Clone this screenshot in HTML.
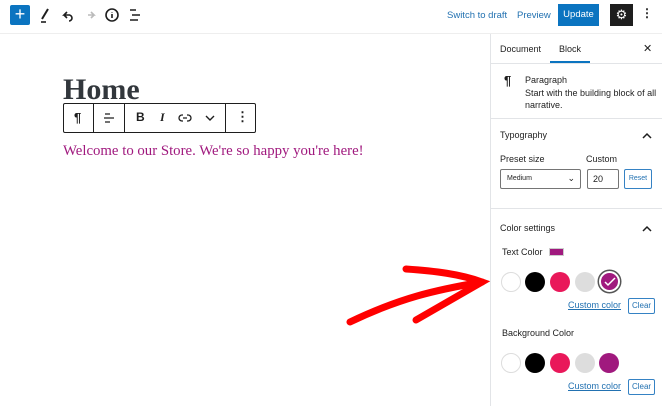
<!DOCTYPE html>
<html><head><style>
*{box-sizing:border-box;margin:0;padding:0}
body{width:662px;height:406px;overflow:hidden;background:#fff;font-family:"Liberation Sans",sans-serif;position:relative;color:#1e1e1e}
.a{position:absolute}
.top{left:0;top:0;width:662px;height:34px;border-bottom:1px solid #eee;}
.hr{position:absolute;left:0;width:171px;height:1px;background:#e2e4e7}
.sw{position:absolute;width:20px;height:20px;border-radius:50%}
.btn{position:absolute;border:1px solid #3582c4;color:#2271b1;font-size:8px;text-align:center;border-radius:2px;background:#fff}
.lnk{position:absolute;color:#2271b1;text-decoration:underline;font-size:9px}
</style></head><body>
<div class="a top">
 <div class="a" style="left:10px;top:5px;width:20px;height:20px;background:#0b74c0;border-radius:2px;color:#fff;font-size:18px;line-height:19px;text-align:center">+</div>
 <svg class="a" style="left:38px;top:7px" width="110" height="16" viewBox="0 0 110 16" fill="none" stroke="#1e1e1e" stroke-width="1.6">
  <path d="M4 12 L10 2" stroke-width="2"/><path d="M3 15h5"/>
  <path d="M32 8h-6l3-3M26 8l3 3M26 8h5a3 3 0 0 1 0 6"/>
  <path d="M50 8h6l-3-3M56 8l-3 3" stroke="#bbb"/>
  <circle cx="74" cy="8" r="6"/><path d="M74 7v4M74 5v.5"/>
  <path d="M92 3h6M94 8h8M92 13h8"/>
 </svg>
 <div class="a" style="left:447px;top:10px;font-size:9.5px;color:#2271b1">Switch to draft</div>
 <div class="a" style="left:517px;top:10px;font-size:9.5px;color:#2271b1">Preview</div>
 <div class="a" style="left:558px;top:4px;width:41px;height:22px;background:#0b74c0;color:#fff;font-size:9.5px;line-height:22px;text-align:center">Update</div>
 <div class="a" style="left:610px;top:4px;width:23px;height:22px;background:#1e1e1e;color:#fff;font-size:13px;line-height:22px;text-align:center">⚙</div>
 <div class="a" style="left:641px;top:6px;font-size:12px;font-weight:bold">⋮</div>
</div>
<div class="a" style="left:63px;top:73px;font-family:'Liberation Serif',serif;font-weight:bold;font-size:30px;color:#32373c">Home</div>
<div class="a" style="left:63px;top:103px;width:193px;height:30px;border:1px solid #1e1e1e;border-radius:2px;font-size:13px">
 <div class="a" style="left:29px;top:0;width:1px;height:28px;background:#1e1e1e"></div>
 <div class="a" style="left:60px;top:0;width:1px;height:28px;background:#1e1e1e"></div>
 <div class="a" style="left:161px;top:0;width:1px;height:28px;background:#1e1e1e"></div>
 <div class="a" style="left:10px;top:6px;font-weight:bold">¶</div>
 <svg class="a" style="left:39px;top:8px" width="12" height="12" stroke="#1e1e1e" stroke-width="1.3"><path d="M2 2h5M1 6h10M2 10h5"/></svg>
 <div class="a" style="left:72px;top:6px;font-weight:bold;font-size:12px">B</div>
 <div class="a" style="left:96px;top:6px;font-style:italic;font-size:12px;font-family:'Liberation Serif',serif;font-weight:bold">I</div>
 <svg class="a" style="left:114px;top:9px" width="14" height="10" fill="none" stroke="#1e1e1e" stroke-width="1.3"><path d="M5 2H4a3 3 0 0 0 0 6h1M9 2h1a3 3 0 0 1 0 6H9M5 5h4"/></svg>
 <svg class="a" style="left:141px;top:11px" width="10" height="8" fill="none" stroke="#1e1e1e" stroke-width="1.4"><path d="M1 1l4 4 4-4"/></svg>
 <div class="a" style="left:172px;top:5px;font-weight:bold">⋮</div>
</div>
<div class="a" style="left:63px;top:143px;font-family:'Liberation Serif',serif;font-size:14.8px;color:#a0197e">Welcome to our Store. We're so happy you're here!</div>
<svg class="a" style="left:340px;top:250px" width="160" height="90" fill="none" stroke="#f00" stroke-linecap="round" stroke-width="7">
 <path d="M10 72 C60 48 95 40 142 32"/><path d="M66 19 C95 21 120 24 142 32 L76 70"/>
</svg>
<div class="a" style="left:490px;top:34px;width:172px;height:372px;border-left:1px solid #e2e4e7;font-size:9px">
 <div class="a" style="left:9px;top:10px;">Document</div>
 <div class="a" style="left:68px;top:10px;">Block</div>
 <div class="a" style="left:59px;top:27px;width:40px;height:2px;background:#0b74c0"></div>
 <div class="a" style="left:152px;top:8px;font-size:11px">✕</div>
 <div class="hr" style="top:29px"></div>
 <div class="a" style="left:13px;top:39px;font-size:13px;font-weight:bold">¶</div>
 <div class="a" style="left:34px;top:41px">Paragraph</div>
 <div class="a" style="left:34px;top:53px;line-height:12px;width:135px">Start with the building block of all narrative.</div>
 <div class="hr" style="top:84px"></div>
 <div class="a" style="left:9px;top:96px">Typography</div>
 <svg class="a" style="left:151px;top:98px" width="10" height="7" fill="none" stroke="#1e1e1e" stroke-width="1.5"><path d="M1 6l4-4 4 4"/></svg>
 <div class="a" style="left:9px;top:120px">Preset size</div>
 <div class="a" style="left:95px;top:120px">Custom</div>
 <div class="a" style="left:9px;top:135px;width:81px;height:20px;border:1px solid #757575;border-radius:2px;font-size:7px;padding:5px 0 0 6px">Medium<span style="position:absolute;right:5px;top:3px;font-size:9px">⌄</span></div>
 <div class="a" style="left:96px;top:135px;width:32px;height:20px;border:1px solid #757575;border-radius:2px;font-size:9px;padding:4px 0 0 5px">20</div>
 <div class="btn" style="left:133px;top:135px;width:28px;height:20px;line-height:18px;font-size:7px">Reset</div>
 <div class="hr" style="top:174px"></div>
 <div class="a" style="left:9px;top:189px">Color settings</div>
 <svg class="a" style="left:151px;top:191px" width="10" height="7" fill="none" stroke="#1e1e1e" stroke-width="1.5"><path d="M1 6l4-4 4 4"/></svg>
 <div class="a" style="left:11px;top:213px">Text Color</div>
 <div class="a" style="left:58px;top:214px;width:15px;height:8px;background:#a0197e;border:1px solid #ccc"></div>
 <div class="sw" style="left:10px;top:238px;border:1px solid #ddd"></div>
 <div class="sw" style="left:34px;top:238px;background:#000"></div>
 <div class="sw" style="left:59px;top:238px;background:#e9185a"></div>
 <div class="sw" style="left:84px;top:238px;background:#ddd"></div>
 <div class="sw" style="left:108px;top:237px;width:21px;height:21px;background:#a0197e;border:2px solid #fff;box-shadow:0 0 0 1.5px #555"></div>
 <svg class="a" style="left:113px;top:243px" width="12" height="10" fill="none" stroke="#fff" stroke-width="1.5"><path d="M1 5l3 3 7-7"/></svg>
 <div class="lnk" style="left:77px;top:266px">Custom color</div>
 <div class="btn" style="left:137px;top:264px;width:27px;height:16px;line-height:14px">Clear</div>
 <div class="a" style="left:11px;top:294px">Background Color</div>
 <div class="sw" style="left:10px;top:319px;border:1px solid #ddd"></div>
 <div class="sw" style="left:34px;top:319px;background:#000"></div>
 <div class="sw" style="left:59px;top:319px;background:#e9185a"></div>
 <div class="sw" style="left:84px;top:319px;background:#ddd"></div>
 <div class="sw" style="left:108px;top:319px;background:#a0197e"></div>
 <div class="lnk" style="left:77px;top:347px">Custom color</div>
 <div class="btn" style="left:137px;top:345px;width:27px;height:16px;line-height:14px">Clear</div>
</div>
</body></html>
